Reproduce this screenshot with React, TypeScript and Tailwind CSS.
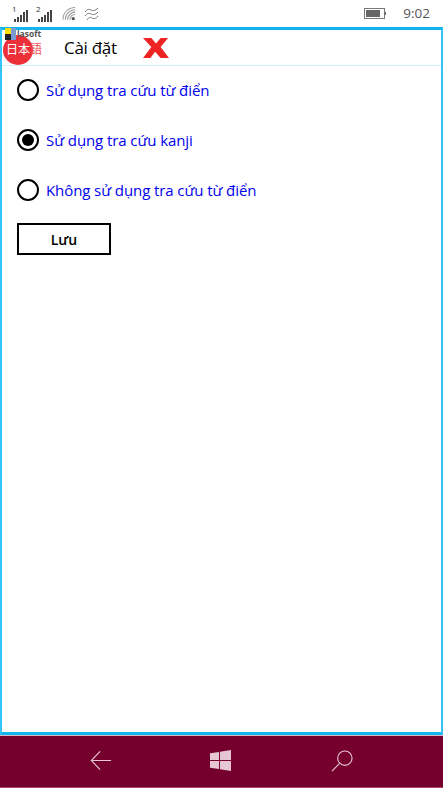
const options = [
  { label: "Sử dụng tra cứu từ điển", checked: false },
  { label: "Sử dụng tra cứu kanji", checked: true },
  { label: "Không sử dụng tra cứu từ điển", checked: false },
]

function Signal({ sim }: { sim: string }) {
  return (
    <div className="relative h-[20px] w-[18px]">
      <span className="absolute left-0 top-[1px] text-[8px] leading-none text-[#333]">{sim}</span>
      <svg className="absolute left-[2px] top-[4px]" width="16" height="14" viewBox="0 0 16 14" fill="#444">
        <rect x="0" y="11" width="2" height="3" />
        <rect x="3" y="9" width="2" height="5" />
        <rect x="6" y="7" width="2" height="7" />
        <rect x="9" y="4" width="2" height="10" />
        <rect x="12" y="2" width="2" height="12" />
      </svg>
    </div>
  )
}

function StatusBar() {
  return (
    <div className="flex h-[27px] items-center bg-white pl-[12px] pr-[13px]">
      <div className="flex items-center gap-[6px]">
        <Signal sim="1" />
        <Signal sim="2" />
      </div>
      <svg className="ml-[8px]" width="15" height="16" viewBox="0 0 16 16" fill="none" stroke="#999" strokeWidth="1.100">
        <path d="M1 14a13 13 0 0 1 13-13" />
        <path d="M3.500 14a10.500 10.500 0 0 1 10.500-10.500" />
        <path d="M6 14a8 8 0 0 1 8-8" />
        <path d="M8.500 14a5.500 5.500 0 0 1 5.500-5.500" />
        <circle cx="12" cy="13" r="1.700" fill="#555" stroke="none" />
      </svg>
      <svg className="ml-[7px]" width="16" height="16" viewBox="0 0 16 16" fill="none" stroke="#777" strokeWidth="1">
        <path d="M1 6c2-3 4-3 6-2s4 1 7-2" />
        <path d="M1 10c2-3 4-3 6-2s4 1 7-2" />
        <path d="M3 14c2-3 3-3 5-2s4 1 6-2" />
      </svg>
      <div className="ml-auto flex items-center gap-[17px]">
        <div className="flex items-center">
          <div className="flex h-[11px] w-[21px] items-center border border-[#777] p-[1px]">
            <div className="h-full w-[14px] bg-[#666]" />
          </div>
          <div className="h-[3px] w-[1px] bg-[#666]" />
        </div>
        <span className="text-[13.500px] leading-none text-[#555]">9:02</span>
      </div>
    </div>
  )
}

function Logo() {
  return (
    <div className="absolute left-[2px] top-0 h-[35px] w-[44px]">
      <div className="absolute left-[-1px] top-[5px] h-[30px] w-[30px] rounded-full bg-[#ed2f3a]" />
      <div className="absolute left-[1px] top-[-2px] grid h-[12px] w-[11px] grid-cols-2">
        <span className="bg-[#ffe000]" />
        <span className="bg-[#7a9bd1]" />
        <span className="bg-[#222]" />
        <span className="bg-[#7a9bd1]" />
      </div>
      <span className="absolute left-[13px] top-[-1px] text-[8.500px] font-bold leading-[10px] text-[#555]">
        lasoft
      </span>
      <span className="absolute left-[2px] top-[11px] whitespace-nowrap font-['Noto_Sans_CJK_JP',sans-serif] text-[12px] leading-[16px]">
        <span className="text-white">日本</span>
        <span className="text-[#f0505a]">語</span>
      </span>
    </div>
  )
}

function RadioRow({ label, checked }: { label: string; checked: boolean }) {
  return (
    <div className="flex h-[50px] items-center gap-[7px]">
      <div className="flex h-[22px] w-[22px] items-center justify-center rounded-full border-2 border-black">
        {checked && <div className="h-[12px] w-[12px] rounded-full bg-black" />}
      </div>
      <span className="text-[15px] leading-none tracking-[-0.090px] text-[#0000ee]">{label}</span>
    </div>
  )
}

export default function App() {
  return (
    <div className="flex h-[788px] w-[443px] flex-col overflow-hidden bg-white font-['Open_Sans',sans-serif]">
      <StatusBar />

      <div className="min-h-0 flex-1 border-x-2 border-y-[3px] border-x-[#35c4f5] border-y-[#12b4f0]">
        <div className="relative flex h-[36px] items-center border-b border-[#cdf0fb] pl-[62px]">
          <Logo />
          <span className="text-[17px] leading-none tracking-[-0.300px] text-black">Cài đặt</span>
          <svg className="ml-[26px]" width="26" height="20" viewBox="0 0 28 22" fill="#ee2424" preserveAspectRatio="none">
            <path d="M0 0h9l5 6 5-6h8l-8 10 9 12h-9l-6-7-5 7H0l9-12z" />
          </svg>
        </div>

        <div className="-mt-px pl-[15px]">
          {options.map((o) => (
            <RadioRow key={o.label} label={o.label} checked={o.checked} />
          ))}
          <button className="mt-[8px] h-[32px] w-[94px] border-2 border-black text-[14px] font-semibold text-black">
            Lưu
          </button>
        </div>
      </div>

      <div className="flex h-[53px] items-center border-y border-t-[#d8b8c8] border-b-[#a8406a] bg-[#75002f] pb-[2px]">
        <div className="flex w-full items-center justify-center gap-[98px]">
          <svg width="22" height="21" viewBox="0 0 24 22" fill="none" stroke="#e6c6d2" strokeWidth="1.200">
            <path d="M23 11H2M11 1 1.500 11 11 21" />
          </svg>
          <svg className="mr-[2px]" width="21" height="21" viewBox="0 0 22 22" fill="#e6c6d2">
            <path d="M0 3.500 9.500 2v8.500H0zM10.500 1.800 22 0v10.500H10.500zM0 11.500h9.500V20L0 18.500zM10.500 11.500H22V22l-11.500-1.800z" />
          </svg>
          <svg width="22" height="22" viewBox="0 0 23 23" fill="none" stroke="#e6c6d2" strokeWidth="1.200">
            <circle cx="14.500" cy="8.500" r="7.500" />
            <path d="M9 14 1 22" />
          </svg>
        </div>
      </div>
    </div>
  )
}
